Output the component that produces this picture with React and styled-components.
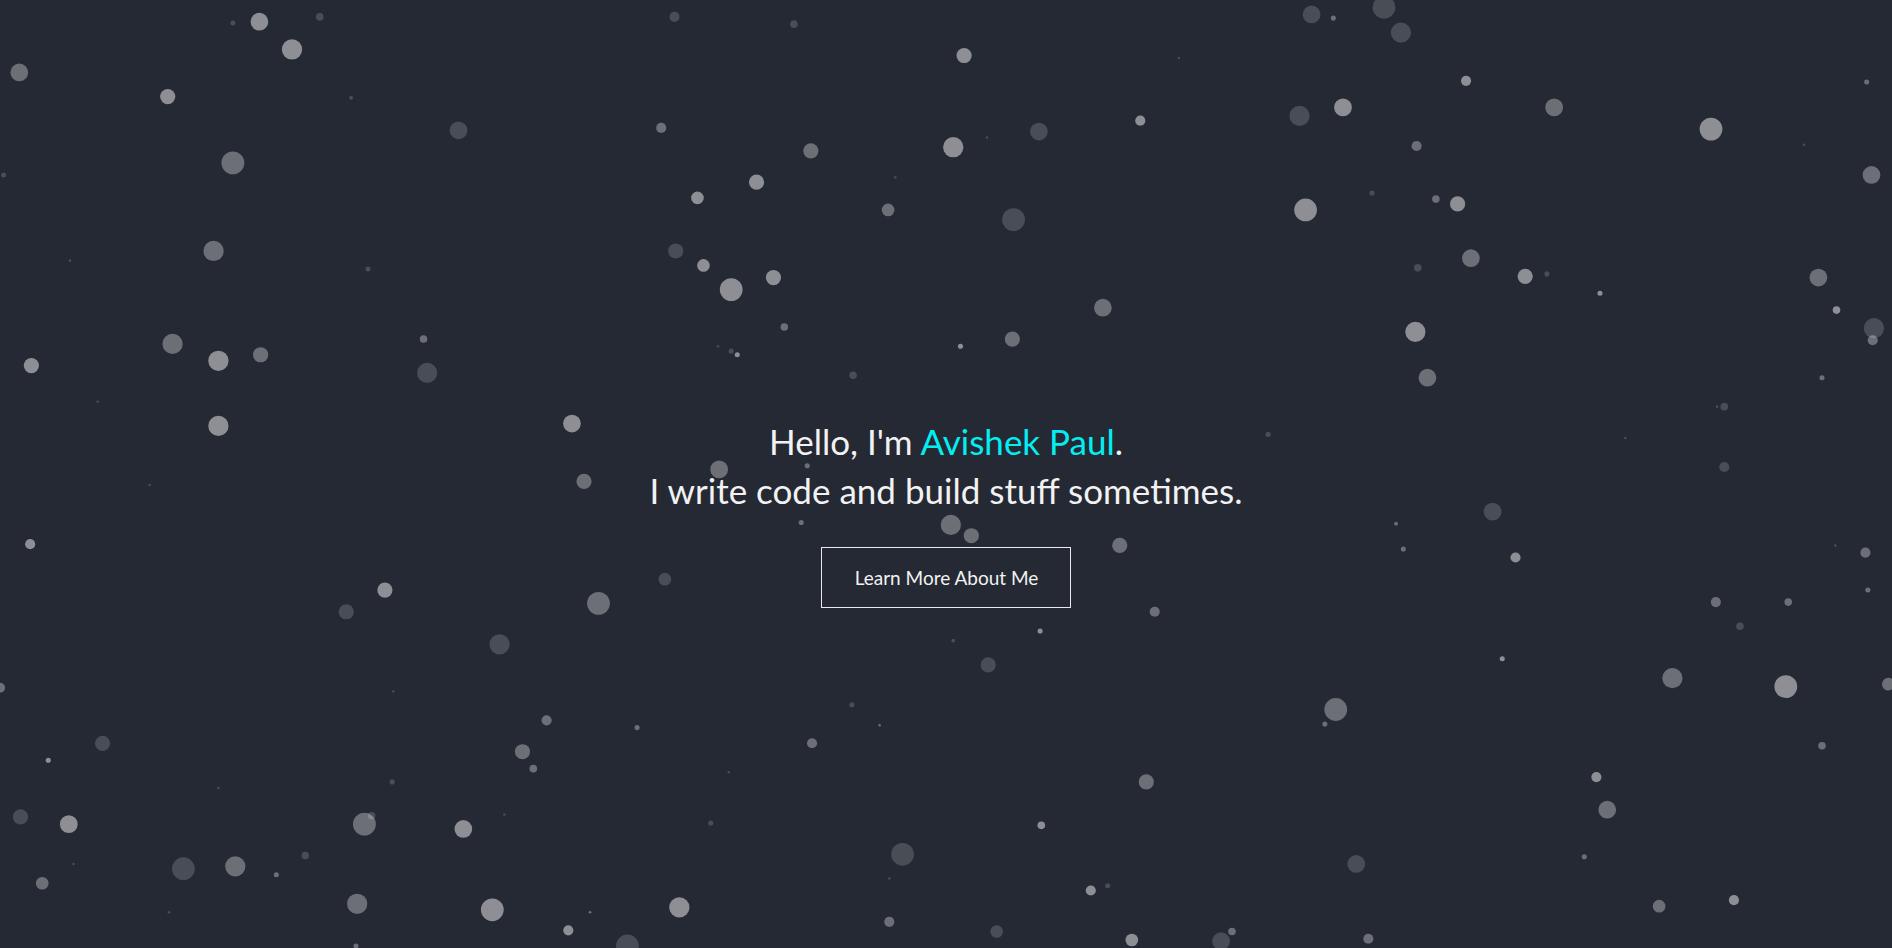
import styled, { createGlobalStyle } from 'styled-components';

const S = 1892 / 1568;

// particle snapshot: [x, y, r, level] measured on the scaled screenshot
const PARTICLES = [
  [215, 18, 7, 3], [193, 19, 2, 1], [265, 14, 3, 1], [242, 41, 8, 3], [16, 60, 7, 2],
  [139, 80, 6, 3], [291, 81, 1.5, 1], [380, 108, 7, 1], [193, 135, 9, 2], [3, 145, 2, 1],
  [177, 208, 8, 2], [58, 216, 1, 1], [305, 223, 2, 1], [143, 285, 8, 2], [181, 299, 8, 3],
  [216, 294, 6, 2], [26, 303, 6, 3], [351, 281, 3, 2], [354, 309, 8, 1], [81, 333, 1, 1],
  [181, 353, 8, 3], [474, 351, 7, 3], [124, 402, 1, 1], [484, 399, 6, 2], [596, 389, 7, 2],
  [669, 386, 2, 2], [25, 451, 4, 3], [319, 489, 6, 3], [287, 507, 6, 1], [496, 500, 9, 2],
  [551, 480, 5, 1], [664, 433, 2, 2], [788, 435, 8, 2], [805, 444, 6, 2], [928, 452, 6, 2],
  [957, 507, 4, 2], [862, 523, 2, 3], [790, 531, 1.5, 1], [819, 551, 6, 1], [414, 534, 8, 1],
  [326, 573, 1, 1], [0, 570, 4, 2], [453, 597, 4, 2], [528, 603, 2, 2], [85, 616, 6, 1],
  [40, 630, 2, 3], [433, 623, 6, 2], [442, 637, 3, 2], [706, 584, 2, 1], [729, 601, 1, 2],
  [673, 616, 4, 2], [604, 640, 1, 1], [325, 648, 2, 1], [181, 653, 1, 1], [950, 648, 6, 2],
  [17, 677, 6, 1], [57, 683, 7, 3], [302, 683, 9, 2], [308, 676, 3, 1], [384, 687, 7, 3],
  [418, 675, 1, 1], [589, 682, 2, 1], [863, 684, 3, 3], [748, 708, 9, 1], [253, 709, 3, 1],
  [152, 720, 9, 1], [195, 718, 8, 2], [229, 725, 2, 2], [35, 732, 5, 2], [61, 716, 1, 1],
  [737, 728, 1, 1], [296, 749, 8, 2], [408, 754, 9, 3], [563, 752, 8, 3], [489, 756, 1, 2],
  [471, 771, 4, 3], [140, 756, 1, 1], [737, 764, 4, 2], [904, 738, 4, 3], [918, 734, 2, 1],
  [826, 772, 5, 1], [938, 779, 5, 3], [1012, 780, 7, 1], [1021, 772, 3, 2], [1134, 778, 4, 2],
  [520, 784, 9, 1], [295, 784, 2, 2], [1124, 716, 7, 1], [1313, 710, 2, 2], [1375, 751, 5, 2],
  [1437, 746, 4, 3], [1332, 671, 7, 2], [1323, 644, 4, 3], [1510, 618, 3, 2], [1480, 569, 9, 3],
  [1565, 567, 5, 2], [1386, 562, 8, 2], [1245, 546, 2, 3], [1107, 588, 9, 2], [1098, 600, 2, 2],
  [1422, 499, 4, 2], [1442, 519, 3, 1], [1482, 499, 3, 2], [1548, 489, 2, 2], [1546, 458, 4, 2],
  [1521, 452, 1, 1], [1256, 462, 4, 3], [1163, 455, 2, 2], [1157, 434, 1.5, 2], [1237, 424, 7, 1],
  [1429, 387, 4, 1], [1347, 363, 1, 1], [1051, 360, 2, 1], [1429, 337, 3, 1], [1423, 337, 1, 1],
  [1510, 313, 2, 2], [1183, 313, 7, 2], [1173, 275, 8, 3], [1552, 282, 4, 2], [1553, 272, 8, 1],
  [1522, 257, 3, 3], [1326, 243, 2, 3], [1264, 229, 6, 3], [1282, 227, 2, 1], [1507, 230, 7, 2],
  [1219, 214, 7, 2], [1175, 222, 3, 1], [1082, 174, 9, 3], [1137, 160, 2, 1], [1190, 165, 3, 2],
  [1208, 169, 6, 3], [1551, 145, 7, 2], [1495, 120, 1, 1], [1174, 121, 4, 2], [1418, 107, 9, 3],
  [1288, 89, 7, 2], [1113, 89, 7, 3], [1077, 96, 8, 1], [1215, 67, 4, 3], [1547, 68, 2, 2],
  [1087, 12, 7, 1], [1105, 15, 2, 2], [1147, 6, 9, 1], [1161, 27, 8, 1], [977, 48, 1, 1],
  [799, 46, 6, 3], [945, 100, 4, 3], [861, 109, 7, 1], [790, 122, 8, 3], [818, 114, 1, 1],
  [742, 147, 1, 1], [736, 174, 5, 2], [840, 182, 9, 1], [914, 255, 7, 2], [839, 281, 6, 2],
  [796, 287, 2, 3], [707, 311, 3, 1], [658, 20, 3, 1], [559, 14, 4, 1], [548, 106, 4, 2],
  [672, 125, 6, 2], [627, 151, 6, 3], [578, 164, 5, 3], [560, 208, 6, 1], [583, 220, 5, 3],
  [606, 240, 9, 3], [641, 230, 6, 3], [650, 271, 3, 2], [606, 291, 2, 1], [611, 294, 2, 3],
  [595, 287, 1, 1],
];

const ALPHA = { 1: 0.17, 2: 0.33, 3: 0.48 };

const GlobalStyle = createGlobalStyle`
  html, body {
    margin: 0;
    padding: 0;
    background: #252934;
  }
  body {
    font-family: 'Lato', 'Liberation Sans', sans-serif;
  }
`;

const Hero = styled.section`
  position: relative;
  width: 100%;
  height: 948px;
  overflow: hidden;
  background: #252934;
`;

const Canvas = styled.svg`
  position: absolute;
  inset: 0;
  width: 100%;
  height: 100%;
`;

const Content = styled.div`
  position: relative;
  z-index: 1;
  height: 100%;
  box-sizing: border-box;
  padding-top: 76px;
  display: flex;
  flex-direction: column;
  align-items: center;
  justify-content: center;
`;

const Heading = styled.h1`
  margin: 0;
  font-size: 35px;
  font-weight: 400;
  line-height: 49px;
  color: #f2f2f2;
  text-align: center;
`;

const Highlight = styled.span`
  color: #04eef2;
`;

const Button = styled.a`
  margin-top: 32px;
  box-sizing: border-box;
  height: 61px;
  padding: 0 32px 0 33px;
  display: flex;
  align-items: center;
  border: 1px solid #eaeaea;
  color: #f2f2f2;
  font-size: 19px;
  text-decoration: none;
  cursor: pointer;
`;

function Particles() {
  return (
    <Canvas viewBox="0 0 1892 948" preserveAspectRatio="none">
      {PARTICLES.map(([x, y, r, lvl], i) => (
        <circle
          key={i}
          cx={x * S}
          cy={y * S}
          r={Math.max(r * S * 1.05, 1)}
          fill="#ffffff"
          fillOpacity={ALPHA[lvl]}
        />
      ))}
    </Canvas>
  );
}

export default function App() {
  return (
    <>
      <GlobalStyle />
      <Hero>
        <Particles />
        <Content>
          <Heading>
            Hello, I'm <Highlight>Avishek Paul</Highlight>.
            <br />
            I write code and build stuff sometimes.
          </Heading>
          <Button>Learn More About Me</Button>
        </Content>
      </Hero>
    </>
  );
}
